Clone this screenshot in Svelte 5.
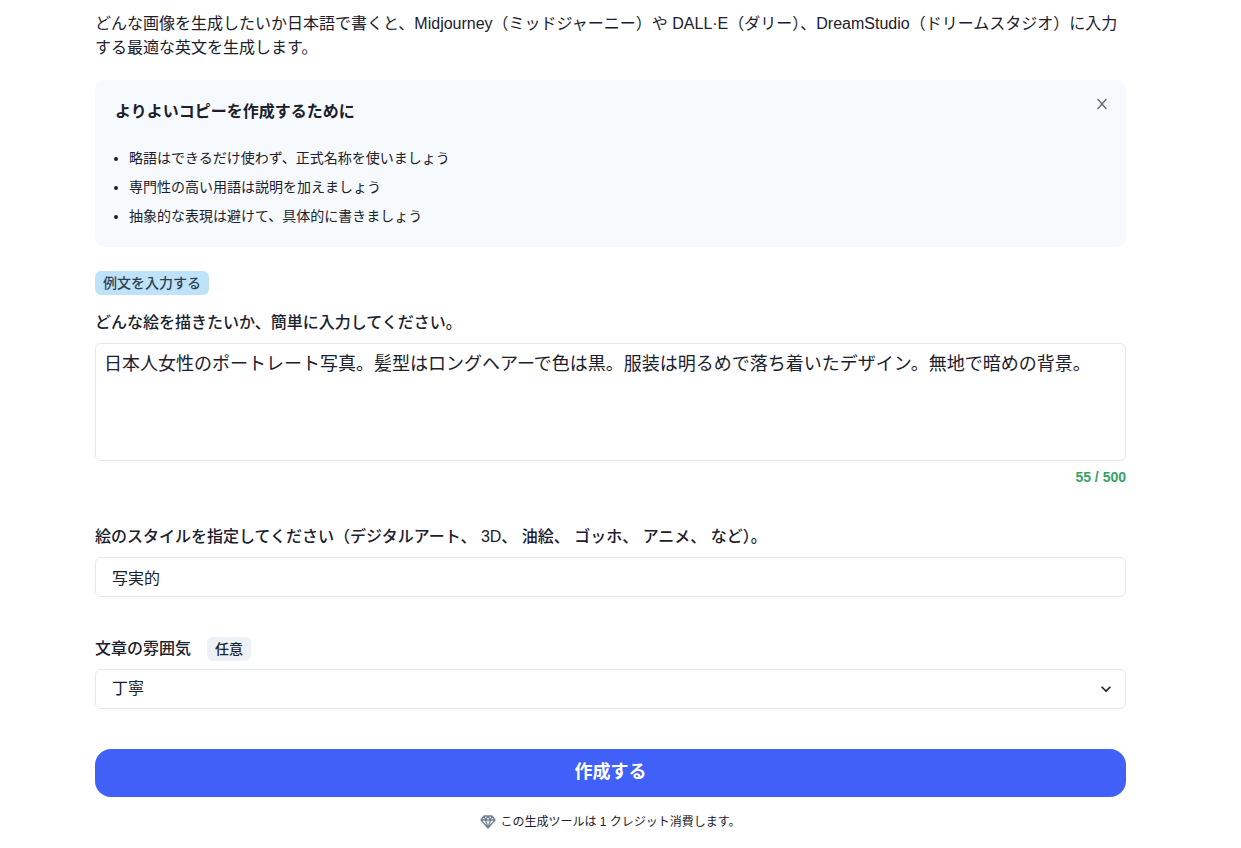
<script>
    const tips = [
        '略語はできるだけ使わず、正式名称を使いましょう',
        '専門性の高い用語は説明を加えましょう',
        '抽象的な表現は避けて、具体的に書きましょう',
    ];
    const tones = ['丁寧', 'カジュアル', 'フォーマル'];
    const maxLength = 500;

    let showTips = true;
    let prompt = '日本人女性のポートレート写真。髪型はロングヘアーで色は黒。服装は明るめで落ち着いたデザイン。無地で暗めの背景。';
    let style = '写実的';
    let tone = tones[0];

    const fillExample = function() {
        prompt = '日本人女性のポートレート写真。髪型はロングヘアーで色は黒。服装は明るめで落ち着いたデザイン。無地で暗めの背景。';
        style = '写実的';
    }
</script>

<main class="page">
    <p class="intro">どんな画像を生成したいか日本語で書くと、Midjourney（ミッドジャーニー）や DALL·E（ダリー）、DreamStudio（ドリームスタジオ）に入力する最適な英文を生成します。</p>

    {#if showTips}
    <section class="tips">
        <div class="tips-header">
            <h2>よりよいコピーを作成するために</h2>
            <button class="close" type="button" aria-label="閉じる" on:click={() => showTips = false}>
                <svg viewBox="0 0 12 12" width="12" height="12"><path d="M1.5 1 10.5 11M10.5 1 1.5 11" /></svg>
            </button>
        </div>
        <ul>
            {#each tips as tip}
            <li>{tip}</li>
            {/each}
        </ul>
    </section>
    {/if}

    <form on:submit|preventDefault>
        <button class="example" type="button" on:click={fillExample}>例文を入力する</button>

        <div class="field">
            <label for="prompt">どんな絵を描きたいか、簡単に入力してください。</label>
            <textarea id="prompt" maxlength={maxLength} bind:value={prompt}></textarea>
            <p class="counter">{prompt.length} / {maxLength}</p>
        </div>

        <div class="field">
            <label for="style">絵のスタイルを指定してください（デジタルアート、 3D、 油絵、 ゴッホ、 アニメ、 など）。</label>
            <input id="style" type="text" bind:value={style}>
        </div>

        <div class="field">
            <div class="label-row">
                <label for="tone">文章の雰囲気</label>
                <span class="optional">任意</span>
            </div>
            <div class="select-wrapper">
                <select id="tone" bind:value={tone}>
                    {#each tones as item}
                    <option value={item}>{item}</option>
                    {/each}
                </select>
                <svg class="chevron" viewBox="0 0 24 24" width="20" height="20"><path d="M16.59 8.59 12 13.17 7.41 8.59 6 10l6 6 6-6z" /></svg>
            </div>
        </div>

        <button class="submit" type="submit">作成する</button>
    </form>

    <p class="credit">
        <svg viewBox="0 0 16 16" width="16" height="16"><path d="M4 2h8l3 4-7 8-7-8zM1 6h14M4 2l1.500 4L8 14l2.500-8L12 2M5.500 6 8 2l2.500 4" /></svg>
        <span>この生成ツールは 1 クレジット消費します。</span>
    </p>
</main>

<style>
    :global(body) {
        background: #fff;
        color: #1a202c;
        font-family: "Liberation Sans", "Noto Sans CJK JP", sans-serif;
        font-size: 16px;
        line-height: 24px;
    }

    * {
        box-sizing: border-box;
    }

    h2, p, ul {
        margin: 0;
    }

    button, input, textarea, select {
        color: inherit;
        font: inherit;
    }

    button {
        border: 0;
        cursor: pointer;
    }

    .page {
        padding: 12px 115px 16px 95px;
    }

    .tips {
        margin: 20px 0 24px;
        padding: 18px 20px 16px;
        border-radius: 10px;
        background: #f6fafd;
    }

    .tips-header {
        display: flex;
        justify-content: space-between;
        align-items: flex-start;
    }

    h2 {
        font-size: 16px;
        line-height: 28px;
    }

    .close {
        display: flex;
        margin-right: -2px;
        padding: 0;
        background: transparent;
    }

    .close svg {
        fill: none;
        stroke: #666;
        stroke-width: 1.3;
    }

    ul {
        margin-top: 18px;
        padding-left: 14px;
        font-size: 14px;
        line-height: 29px;
    }

    .example {
        display: block;
        height: 24px;
        padding: 0 8px 1px;
        border-radius: 6px;
        background: #bee3f8;
        color: #2d3f55;
        font-size: 14px;
        font-weight: 500;
    }

    .field {
        display: flex;
        flex-direction: column;
        margin-bottom: 40px;
    }

    .example + .field {
        margin: 16px 0 36px;
    }

    label {
        font-weight: 500;
    }

    textarea, input, select {
        width: 100%;
        margin: 8px 0 0;
        border: 1px solid #e2e8f0;
        border-radius: 6px;
        background: #fff;
    }

    textarea {
        height: 118px;
        padding: 7px 8px;
        font-size: 18px;
        line-height: 27px;
        resize: none;
    }

    input, select {
        height: 40px;
        padding: 0 16px;
    }

    .counter {
        margin-top: 4px;
        color: #38a169;
        font-size: 14px;
        font-weight: 700;
        text-align: right;
    }

    .label-row {
        display: flex;
        align-items: center;
        gap: 16px;
    }

    .optional {
        padding: 0 8px;
        border-radius: 6px;
        background: #edf2f7;
        font-size: 14px;
        font-weight: 500;
    }

    .select-wrapper {
        position: relative;
    }

    select {
        display: block;
        appearance: none;
    }

    .chevron {
        position: absolute;
        top: 18px;
        right: 10px;
        fill: #1a202c;
        pointer-events: none;
    }

    .submit {
        width: 100%;
        height: 48px;
        padding: 0 16px 2px;
        border-radius: 16px;
        background: #4060f8;
        color: #fff;
        font-size: 18px;
        font-weight: 700;
    }

    .credit {
        display: flex;
        justify-content: center;
        align-items: center;
        gap: 4px;
        margin-top: 13px;
        font-size: 12px;
    }

    .credit svg {
        fill: none;
        stroke: #718096;
        stroke-linejoin: round;
        stroke-width: 1.3;
    }
</style>
